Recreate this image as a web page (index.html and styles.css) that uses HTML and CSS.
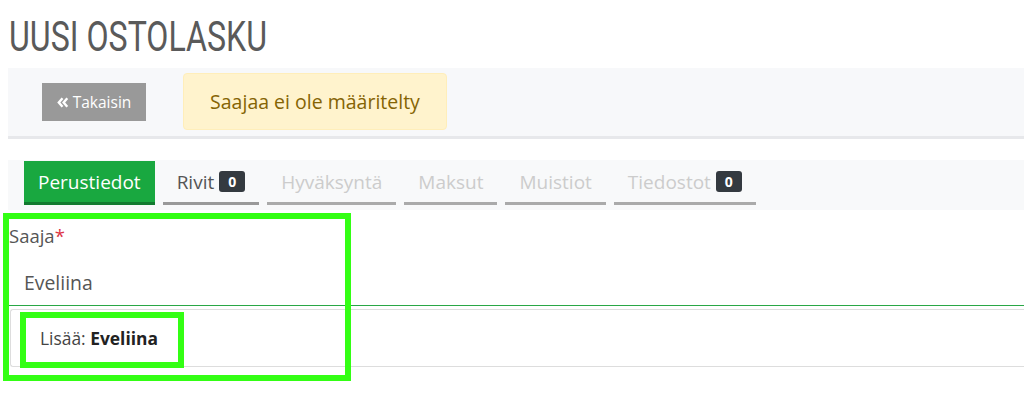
FILE: index.html
```html
<!DOCTYPE html>
<html lang="fi">
<head>
  <meta charset="UTF-8">
  <title>Uusi ostolasku</title>
  <link rel="stylesheet" href="styles.css">
</head>
<body>
<h1 class="page-title"><span>UUSI OSTOLASKU</span></h1>

<div class="toolbar">
  <button class="btn-back">
    <svg width="12" height="11" viewBox="0 0 12 11"><path d="M5.5 1.2 L1.8 5.5 L5.5 9.8 M10.3 1.2 L6.6 5.5 L10.3 9.8" fill="none" stroke="#fff" stroke-width="2.4"/></svg>
    Takaisin
  </button>
  <div class="alert-warning">Saajaa ei ole määritelty</div>
</div>

<div class="tabs">
  <div class="tab active">Perustiedot</div>
  <div class="tab">Rivit <span class="badge">0</span></div>
  <div class="tab disabled">Hyväksyntä</div>
  <div class="tab disabled">Maksut</div>
  <div class="tab disabled">Muistiot</div>
  <div class="tab disabled">Tiedostot <span class="badge">0</span></div>
</div>

<div class="form">
  <label class="field-label">Saaja<span class="req">*</span></label>
  <div class="field-input">Eveliina</div>
  <div class="dropdown">
    <div class="dropdown-item">Lisää: <b>Eveliina</b></div>
  </div>
  <!-- korostukset -->
  <div class="mark mark-outer"></div>
  <div class="mark mark-inner"></div>
</div>
</body>
</html>
```

FILE: styles.css
```css
body {
  margin: 0;
  min-height: 405px;
  font-family: "Open Sans", "Noto Sans", sans-serif;
  color: #555;
  background: #fff;
  overflow: hidden;
}
.page-title {
  margin: 0;
  height: 68px;
  padding-left: 9px;
  font-family: Roboto, sans-serif;
  font-weight: 400;
  font-size: 42px;
  line-height: 74px;
  color: #5a5a5a;
  white-space: nowrap;
}
.page-title span {
  display: inline-block;
  transform: scaleX(0.765);
  transform-origin: left center;
}
.toolbar {
  margin-left: 8px;
  height: 68px;
  background: #f7f8fa;
  border-bottom: 3px solid #e7e8eb;
  display: flex;
  align-items: flex-start;
  padding-left: 34px;
}
.btn-back {
  margin-top: 15px;
  width: 104px;
  height: 38px;
  background: #999;
  border: none;
  border-radius: 0;
  color: #fff;
  font-family: "Open Sans", sans-serif;
  font-size: 15.5px;
  display: flex;
  align-items: center;
  justify-content: center;
  gap: 4px;
  padding: 0;
}
.alert-warning {
  margin-top: 5px;
  margin-left: 37px;
  width: 264px;
  height: 57px;
  box-sizing: border-box;
  background: #fff3cd;
  border: 1px solid #ffeeba;
  border-radius: 4px;
  color: #856404;
  font-size: 19.5px;
  display: flex;
  align-items: center;
  justify-content: center;
}
.tabs {
  margin: 21px 0 0 8px;
  height: 50px;
  background: #f8f9fa;
  display: flex;
  gap: 8px;
  padding-left: 16px;
  align-items: flex-start;
}
.tab {
  height: 44px;
  box-sizing: border-box;
  padding: 0 14px;
  border-bottom: 3px solid #999;
  font-size: 19px;
  color: #555;
  display: flex;
  align-items: center;
  gap: 5px;
  margin-top: 1px;
  white-space: nowrap;
}
.tab.active {
  background: #19a840;
  color: #fff;
  border-bottom-color: #127a2f;
}
.tab.disabled {
  color: #ccc;
  border-bottom-color: #aaa;
}
.badge {
  background: #343a40;
  color: #fff;
  font-size: 14px;
  font-weight: 700;
  border-radius: 3px;
  width: 26px;
  text-align: center;
  height: 21px;
  line-height: 21px;
}
.form {
  position: relative;
  padding-left: 8px;
  padding-top: 14px;
  padding-bottom: 30px;
}
.field-label {
  display: block;
  font-size: 18.5px;
  margin-left: 1px;
  line-height: 24px;
  color: #555;
}
.req {
  color: #dc3545;
}
.field-input {
  margin-top: 12px;
  height: 46px;
  box-sizing: border-box;
  padding: 9px 16px 0;
  font-size: 19.4px;
  color: #555;
  border-bottom: 1px solid #28a745;
}
.dropdown {
  margin: 3px 0 0 2px;
  height: 58px;
  box-sizing: border-box;
  border: 1px solid #ddd;
  border-right: none;
  border-radius: 3px 0 0 3px;
  display: flex;
  align-items: center;
}
.dropdown-item {
  padding-left: 29px;
  font-size: 17.4px;
  color: #444;
}
.dropdown-item b {
  color: #222;
}
.mark {
  position: absolute;
  border: 6px solid #33ff14;
  box-sizing: border-box;
}
.mark-outer {
  left: 3px;
  top: 3px;
  width: 348px;
  height: 168px;
}
.mark-inner {
  left: 20px;
  top: 102px;
  width: 164px;
  height: 56px;
}
```
